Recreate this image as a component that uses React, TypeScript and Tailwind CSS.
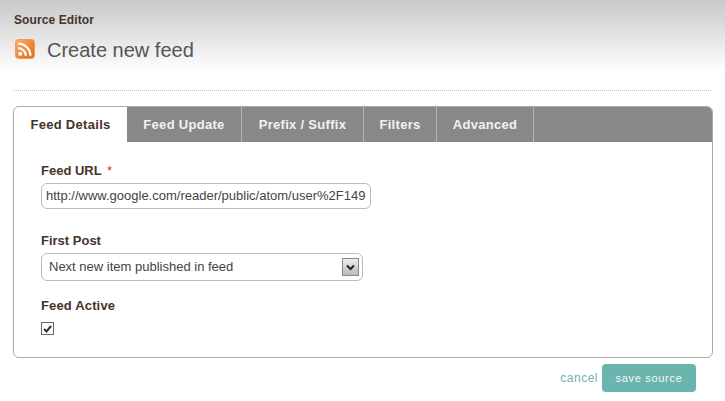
import React from 'react';

const tabs = [
  { label: 'Feed Update', width: 'w-[115px]' },
  { label: 'Prefix / Suffix', width: 'w-[122px]' },
  { label: 'Filters', width: 'w-[73px]' },
  { label: 'Advanced', width: 'w-[97px]' },
];

const RssIcon = () => (
  <svg width="20" height="20" viewBox="0 0 20 20" className="-mt-[2px] ml-[1px]">
    <defs>
      <linearGradient id="rss" x1="0" y1="0" x2="1" y2="1">
        <stop offset="0" stopColor="#f7b27a" />
        <stop offset="0.5" stopColor="#f0883a" />
        <stop offset="1" stopColor="#e0701f" />
      </linearGradient>
    </defs>
    <rect x="0.5" y="0.5" width="19" height="19" rx="3" fill="url(#rss)" stroke="#ee9a5c" />
    <circle cx="5.2" cy="14.8" r="2" fill="#fff" />
    <path d="M3.2 9.2a7.6 7.6 0 0 1 7.6 7.6" fill="none" stroke="#fff" strokeWidth="2.2" />
    <path d="M3.2 4.6a12.2 12.2 0 0 1 12.2 12.2" fill="none" stroke="#fff" strokeWidth="2.2" />
  </svg>
);

const Check = () => (
  <svg width="9" height="8" viewBox="0 0 9 8">
    <path d="M1 4l2.5 2.5L8 1" fill="none" stroke="#333" strokeWidth="2" />
  </svg>
);

export default function App() {
  return (
    <div className="w-[725px] h-[401px] overflow-hidden bg-white font-['Liberation_Sans',Arial,sans-serif]">
      <div className="h-[72px] bg-gradient-to-b from-[#c9c9c9] to-white px-[14px] pt-[13px]">
        <div className="text-[12px] leading-[14px] font-bold tracking-[0.1px] text-[#43342b]">Source Editor</div>
        <div className="mt-[11px] flex items-center gap-[12px]">
          <RssIcon />
          <h1 className="text-[20px] leading-[24px] text-[#555]">Create new feed</h1>
        </div>
      </div>
      <div className="mx-[14px] mt-[18px] border-t border-dotted border-[#bbb]" />
      <div className="mx-[13px] mt-[15px] h-[252px] w-[700px] rounded-[6px] border border-[#aaa] overflow-hidden">
        <div className="flex h-[35px] bg-[#888]">
          <div className="flex w-[113px] items-center justify-center bg-white text-[13px] font-bold tracking-[0.3px] text-[#43342b]">Feed Details</div>
          {tabs.map((tab) => (
            <div
              key={tab.label}
              className={`flex ${tab.width} items-center justify-center border-r border-[#b5b5b5] text-[13px] font-bold tracking-[0.3px] text-[#f2f2f2]`}
            >
              {tab.label}
            </div>
          ))}
        </div>
        <div className="px-[27px] pt-[21px]">
          <label className="block text-[13px] leading-[15px] font-bold text-[#43342b]">
            Feed URL <span className="ml-[2px] font-normal text-[#c33]">*</span>
          </label>
          <div className="mt-[5px] flex h-[26px] w-[330px] items-center overflow-hidden whitespace-nowrap rounded-[6px] border border-[#bbb] pl-[4px] text-[13px] text-[#444]">
            http://www.google.com/reader/public/atom/user%2F149
          </div>
          <label className="mt-[24px] block text-[13px] leading-[15px] font-bold text-[#43342b]">First Post</label>
          <div className="mt-[5px] flex h-[28px] w-[322px] items-center justify-between rounded-[6px] border border-[#bbb] pl-[7px] pr-[3px] text-[13px] text-[#444]">
            <span>Next new item published in feed</span>
            <span className="flex h-[18px] w-[17px] items-center justify-center border border-[#888] bg-gradient-to-b from-[#eee] to-[#bbb]">
              <svg width="9" height="7" viewBox="0 0 9 7">
                <path d="M1 1.5l3.5 3.5L8 1.5" fill="none" stroke="#222" strokeWidth="2" />
              </svg>
            </span>
          </div>
          <label className="mt-[17px] block text-[13px] leading-[15px] font-bold tracking-[0.15px] text-[#43342b]">Feed Active</label>
          <div className="mt-[9px] flex h-[13px] w-[13px] items-center justify-center border border-[#666] bg-white">
            <Check />
          </div>
        </div>
      </div>
      <div className="mt-[6px] flex items-center justify-end gap-[4px] pr-[29px]">
        <a className="text-[12px] tracking-[0.5px] text-[#6fb5b0]">cancel</a>
        <button className="h-[28px] w-[94px] rounded-[4px] bg-[#6bb5ae] text-[11px] tracking-[0.7px] text-[#eefaf8]">
          save source
        </button>
      </div>
    </div>
  );
}
